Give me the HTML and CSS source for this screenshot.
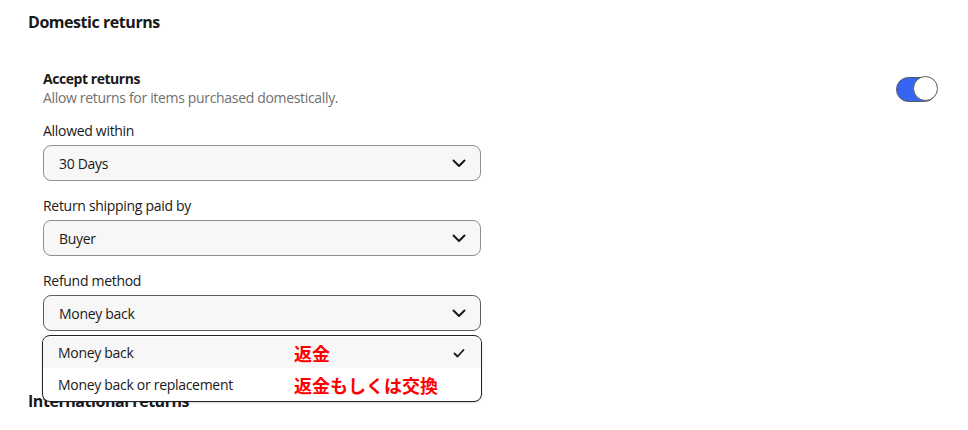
FILE: index.html
```html
<!DOCTYPE html>
<html lang="en">
<head>
<meta charset="utf-8">
<link rel="stylesheet" href="styles.css">
</head>
<body>
<main class="page">
  <h2 class="section-title">Domestic returns</h2>
  <div class="section-body">
    <div class="toggle-row">
      <div>
        <div class="toggle-title">Accept returns</div>
        <div class="toggle-sub">Allow returns for items purchased domestically.</div>
      </div>
      <span class="switch"><span class="knob"></span></span>
    </div>

    <div class="field">
      <div class="label">Allowed within</div>
      <div class="select"><span>30 Days</span>
        <svg class="chev" width="14" height="14" viewBox="0 0 14 14"><path d="M1.5 4.5 L7 10 L12.5 4.5" fill="none" stroke="#191919" stroke-width="2" stroke-linecap="round" stroke-linejoin="round"/></svg>
      </div>
    </div>

    <div class="field">
      <div class="label">Return shipping paid by</div>
      <div class="select"><span>Buyer</span>
        <svg class="chev" width="14" height="14" viewBox="0 0 14 14"><path d="M1.5 4.5 L7 10 L12.5 4.5" fill="none" stroke="#191919" stroke-width="2" stroke-linecap="round" stroke-linejoin="round"/></svg>
      </div>
    </div>

    <div class="field field-open">
      <div class="label">Refund method</div>
      <div class="select select-open"><span>Money back</span>
        <svg class="chev" width="14" height="14" viewBox="0 0 14 14"><path d="M1.5 4.5 L7 10 L12.5 4.5" fill="none" stroke="#191919" stroke-width="2" stroke-linecap="round" stroke-linejoin="round"/></svg>
      </div>
      <ul class="listbox">
        <li class="option option-active"><span class="opt-text">Money back</span><span class="note">返金</span>
          <svg class="check" width="14" height="14" viewBox="0 0 14 14"><path d="M2.5 7.5 L5.5 10.5 L11.5 4" fill="none" stroke="#191919" stroke-width="1.8" stroke-linecap="round" stroke-linejoin="round"/></svg>
        </li>
        <li class="option"><span class="opt-text">Money back or replacement</span><span class="note">返金もしくは交換</span></li>
      </ul>
    </div>
  </div>
  <h2 class="section-title intl">International returns</h2>
</main>
</body>
</html>
```

FILE: styles.css
```css
* { box-sizing: border-box; }
html, body { margin: 0; padding: 0; background: #fff; }
body {
  font-family: "Open Sans", "Liberation Sans", "Noto Sans CJK JP", sans-serif;
  color: #191919;
  width: 968px;
  height: 430px;
  overflow: hidden;
}
.page { padding: 10px 0 0 28px; }
.section-title {
  margin: 0;
  font-size: 16px;
  line-height: 24px;
  font-weight: 700;
  letter-spacing: -0.45px;
}
.section-body { padding: 35px 0 0 15px; }
.toggle-row {
  display: flex;
  justify-content: space-between;
  align-items: center;
  width: 894px;
  margin-bottom: 14px;
}
.toggle-title { font-size: 14px; line-height: 19px; font-weight: 700; letter-spacing: -0.45px; }
.toggle-sub { font-size: 14px; line-height: 19px; color: #707070; letter-spacing: -0.33px; }
.switch {
  position: relative;
  display: block;
  width: 41px;
  height: 25px;
  border-radius: 13px;
  background: #3665f3;
  border: 1.5px solid #5a5a5a;
  margin-top: 2px;
}
.knob {
  position: absolute;
  right: -1.5px;
  top: -1.5px;
  width: 25px;
  height: 25px;
  border-radius: 50%;
  background: #fff;
  border: 1.5px solid #5a5a5a;
}
.field { width: 438px; margin-bottom: 15px; }
.label { font-size: 14px; line-height: 20px; margin-bottom: 4px; letter-spacing: -0.3px; }
.select {
  display: flex;
  align-items: center;
  justify-content: space-between;
  height: 36px;
  padding: 0 14px 0 15px;
  background: #f7f7f7;
  border: 1px solid #8f8f8f;
  border-radius: 8px;
  font-size: 14px;
  letter-spacing: -0.3px;
}
.select-open { border-color: #5e5e5e; }
.chev { display: block; }
.field-open { position: relative; margin-bottom: 0; }
.listbox {
  position: absolute;
  left: -1px;
  right: -1px;
  top: 64px;
  margin: 0;
  padding: 1px 0 0;
  list-style: none;
  background: #fff;
  border: 1.5px solid #222;
  border-radius: 8px;
  overflow: hidden;
  z-index: 2;
  box-shadow: 0 1px 2px rgba(0,0,0,0.15);
}
.option {
  display: flex;
  align-items: center;
  height: 31px;
  padding: 0 15px 0 15px;
  font-size: 14px;
  letter-spacing: -0.3px;
}
.option + .option { height: 33px; }
.option-active { background: #f7f7f7; }
.opt-text { width: 236px; flex: none; }
.note {
  color: #ff0000;
  font-family: "Noto Sans CJK JP", sans-serif;
  font-weight: 700;
  font-size: 18px;
  line-height: 20px;
  letter-spacing: 0;
}
.check { margin-left: auto; display: block; }
.intl { margin-top: 58px; position: relative; z-index: 1; }
```
